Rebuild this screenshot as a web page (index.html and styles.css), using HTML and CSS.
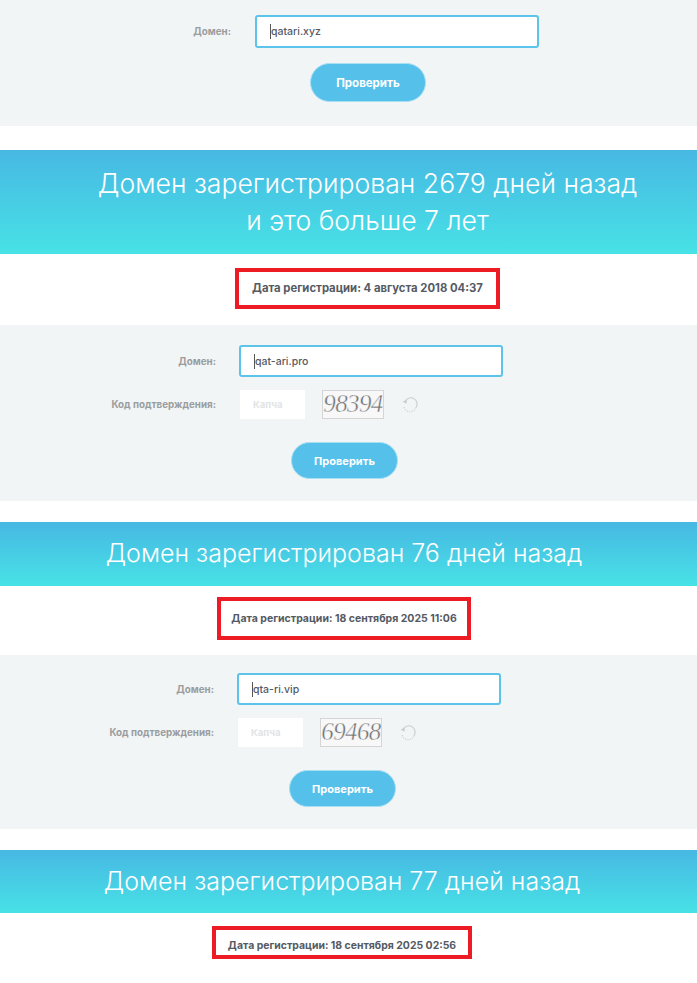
FILE: index.html
```html
<!DOCTYPE html>
<html lang="ru">
<head>
    <meta charset="UTF-8">
    <meta name="viewport" content="width=device-width, initial-scale=1.0">
    <title>Проверка домена</title>
    <link rel="stylesheet" href="styles.css">
</head>
<body>
    <form class="check-form form-first">
        <div class="form-row">
            <label class="form-label">Домен:</label>
            <div class="field"><span class="caret"></span><input class="domain-input" type="text" value="qatari.xyz"></div>
        </div>
        <div class="form-submit"><button class="submit-btn" type="button">Проверить</button></div>
    </form>

    <section class="result result-first">
        <h2 class="banner banner-tall">Домен зарегистрирован 2679 дней назад<br>и это больше 7 лет</h2>
        <div class="date-wrap"><p class="date-box">Дата регистрации: 4 августа 2018 04:37</p></div>
    </section>

    <form class="check-form form-second">
        <div class="form-row">
            <label class="form-label">Домен:</label>
            <div class="field"><span class="caret"></span><input class="domain-input" type="text" value="qat-ari.pro"></div>
        </div>
        <div class="form-row captcha-row">
            <label class="form-label">Код подтверждения:</label>
            <input class="captcha-input" type="text" placeholder="Капча">
            <div class="captcha-img">98394</div>
            <svg class="refresh" viewBox="0 0 16 16" width="16" height="16">
                <path d="M3.6 3.6A6.2 6.2 0 0 1 14 10.5" fill="none" stroke="#c8cdcf" stroke-width="1.1"/>
                <path d="M14 10.5A6.2 6.2 0 0 1 2 9.5" fill="none" stroke="#c8cdcf" stroke-width="1.1" stroke-dasharray="1.2 1.2"/>
                <path d="M0.6 4.8L4.6 2.4L4.6 6.8Z" fill="#c8cdcf"/>
            </svg>
        </div>
        <div class="form-submit"><button class="submit-btn" type="button">Проверить</button></div>
    </form>

    <section class="result result-second">
        <h2 class="banner">Домен зарегистрирован 76 дней назад</h2>
        <div class="date-wrap"><p class="date-box">Дата регистрации: 18 сентября 2025 11:06</p></div>
    </section>

    <form class="check-form form-third">
        <div class="form-row">
            <label class="form-label">Домен:</label>
            <div class="field"><span class="caret"></span><input class="domain-input" type="text" value="qta-ri.vip"></div>
        </div>
        <div class="form-row captcha-row">
            <label class="form-label">Код подтверждения:</label>
            <input class="captcha-input" type="text" placeholder="Капча">
            <div class="captcha-img">69468</div>
            <svg class="refresh" viewBox="0 0 16 16" width="16" height="16">
                <path d="M3.6 3.6A6.2 6.2 0 0 1 14 10.5" fill="none" stroke="#c8cdcf" stroke-width="1.1"/>
                <path d="M14 10.5A6.2 6.2 0 0 1 2 9.5" fill="none" stroke="#c8cdcf" stroke-width="1.1" stroke-dasharray="1.2 1.2"/>
                <path d="M0.6 4.8L4.6 2.4L4.6 6.8Z" fill="#c8cdcf"/>
            </svg>
        </div>
        <div class="form-submit"><button class="submit-btn" type="button">Проверить</button></div>
    </form>

    <section class="result result-third">
        <h2 class="banner">Домен зарегистрирован 77 дней назад</h2>
        <div class="date-wrap"><p class="date-box">Дата регистрации: 18 сентября 2025 02:56</p></div>
    </section>
</body>
</html>
```

FILE: styles.css
```css
body {
    margin: 0;
    height: 983px;
    overflow: hidden;
    background-color: #fff;
    color: #555a63;
    font-family: Inter, "Noto Sans", sans-serif;
}

.check-form {
    background-color: #f2f5f6;
    box-sizing: border-box;
}

.form-first {
    height: 126px;
    padding: 15px 0 0 0;
    --label-width: 231px;
}

.form-second {
    height: 176px;
    margin-top: 16px;
    padding: 20px 0 0 0;
    --label-width: 216px;
}

.form-third {
    height: 174px;
    margin-top: 15px;
    padding: 18px 0 0 0;
    --label-width: 214px;
}

.form-row {
    display: flex;
    align-items: center;
}

.form-label {
    box-sizing: border-box;
    width: var(--label-width);
    margin-right: 24px;
    text-align: right;
    font-size: 9.8px;
    font-weight: 700;
    color: #9a9d9f;
    white-space: nowrap;
}

.form-second .form-label,
.form-third .form-label {
    margin-right: 23px;
}

.field {
    position: relative;
    width: 264px;
}

.form-first .field {
    width: 284px;
}

.caret {
    position: absolute;
    left: 15px;
    top: 9px;
    width: 1px;
    height: 15px;
    background-color: #555;
}

.domain-input {
    display: block;
    box-sizing: border-box;
    width: 100%;
    height: 32px;
    padding: 0 14px;
    background-color: #fff;
    border: 2px solid #5cc3ea;
    border-radius: 3px;
    font-family: inherit;
    font-size: 10.5px;
    font-weight: 500;
    color: #555a63;
    outline: none;
}

.form-first .domain-input {
    height: 33px;
}

.captcha-row {
    margin-top: 13px;
}

.captcha-input {
    box-sizing: border-box;
    width: 65px;
    height: 29px;
    margin-left: 1px;
    padding: 0 13px;
    background-color: #fff;
    border: none;
    font-family: inherit;
    font-size: 9.5px;
    font-weight: 700;
    outline: none;
}

.captcha-input::placeholder {
    color: #e2e4e5;
}

.captcha-img {
    box-sizing: border-box;
    width: 62px;
    height: 29px;
    margin-left: 17px;
    background-color: #f8f8f8;
    border: 1px solid #d4d6d6;
    font-family: "Liberation Serif", serif;
    font-style: italic;
    font-size: 25px;
    line-height: 26px;
    letter-spacing: -0.6px;
    text-align: center;
    color: #6f7173;
    -webkit-text-stroke: 0.45px #f8f8f8;
    overflow: hidden;
}

.refresh {
    margin-left: 18px;
}

.form-submit {
    display: flex;
    justify-content: center;
    margin-top: 15px;
    padding-left: 39px;
}

.form-second .form-submit {
    margin-top: 23px;
    padding: 0 8px 0 0;
}

.form-third .form-submit {
    margin-top: 23px;
    padding: 0 12px 0 0;
}

.submit-btn {
    width: 116px;
    height: 39px;
    background-color: #55c1ea;
    border: 1px solid #a9dff3;
    border-radius: 20px;
    font-family: inherit;
    font-size: 11.5px;
    font-weight: 700;
    color: #fff;
}

.form-second .submit-btn,
.form-third .submit-btn {
    width: 107px;
    height: 37px;
    font-size: 11px;
}

.result-first {
    margin-top: 24px;
    --text-left: 38px;
    --text-right: 0px;
}

.result-second {
    margin-top: 21px;
    --text-left: 0px;
    --text-right: 9px;
}

.result-third {
    margin-top: 21px;
    --text-left: 0px;
    --text-right: 13px;
}

.banner {
    box-sizing: border-box;
    height: 64px;
    margin: 0;
    padding: 0 var(--text-right) 0 var(--text-left);
    background: linear-gradient(#47b8e3, #47e2e6);
    font-size: 25px;
    font-weight: 300;
    line-height: 63px;
    text-align: center;
    color: #fff;
    white-space: nowrap;
}

.banner-tall {
    height: 104px;
    padding-top: 15px;
    font-size: 26.6px;
    line-height: 37px;
}

.result-third .banner {
    height: 63px;
}

.date-wrap {
    display: flex;
    justify-content: center;
    padding: 14px var(--text-right) 0 var(--text-left);
}

.result-second .date-wrap {
    padding-top: 11px;
}

.result-third .date-wrap {
    padding-top: 13px;
}

.date-box {
    box-sizing: border-box;
    height: 41px;
    margin: 0;
    padding: 0 13px;
    border: 4px solid #ed1c24;
    font-size: 11.3px;
    font-weight: 700;
    line-height: 33px;
    white-space: nowrap;
}

.result-second .date-box {
    height: 43px;
    padding: 0 10px;
    font-size: 10.5px;
    line-height: 35px;
}

.result-third .date-box {
    height: 33px;
    padding: 0 12px;
    font-size: 10.45px;
    line-height: 32px;
}
```
